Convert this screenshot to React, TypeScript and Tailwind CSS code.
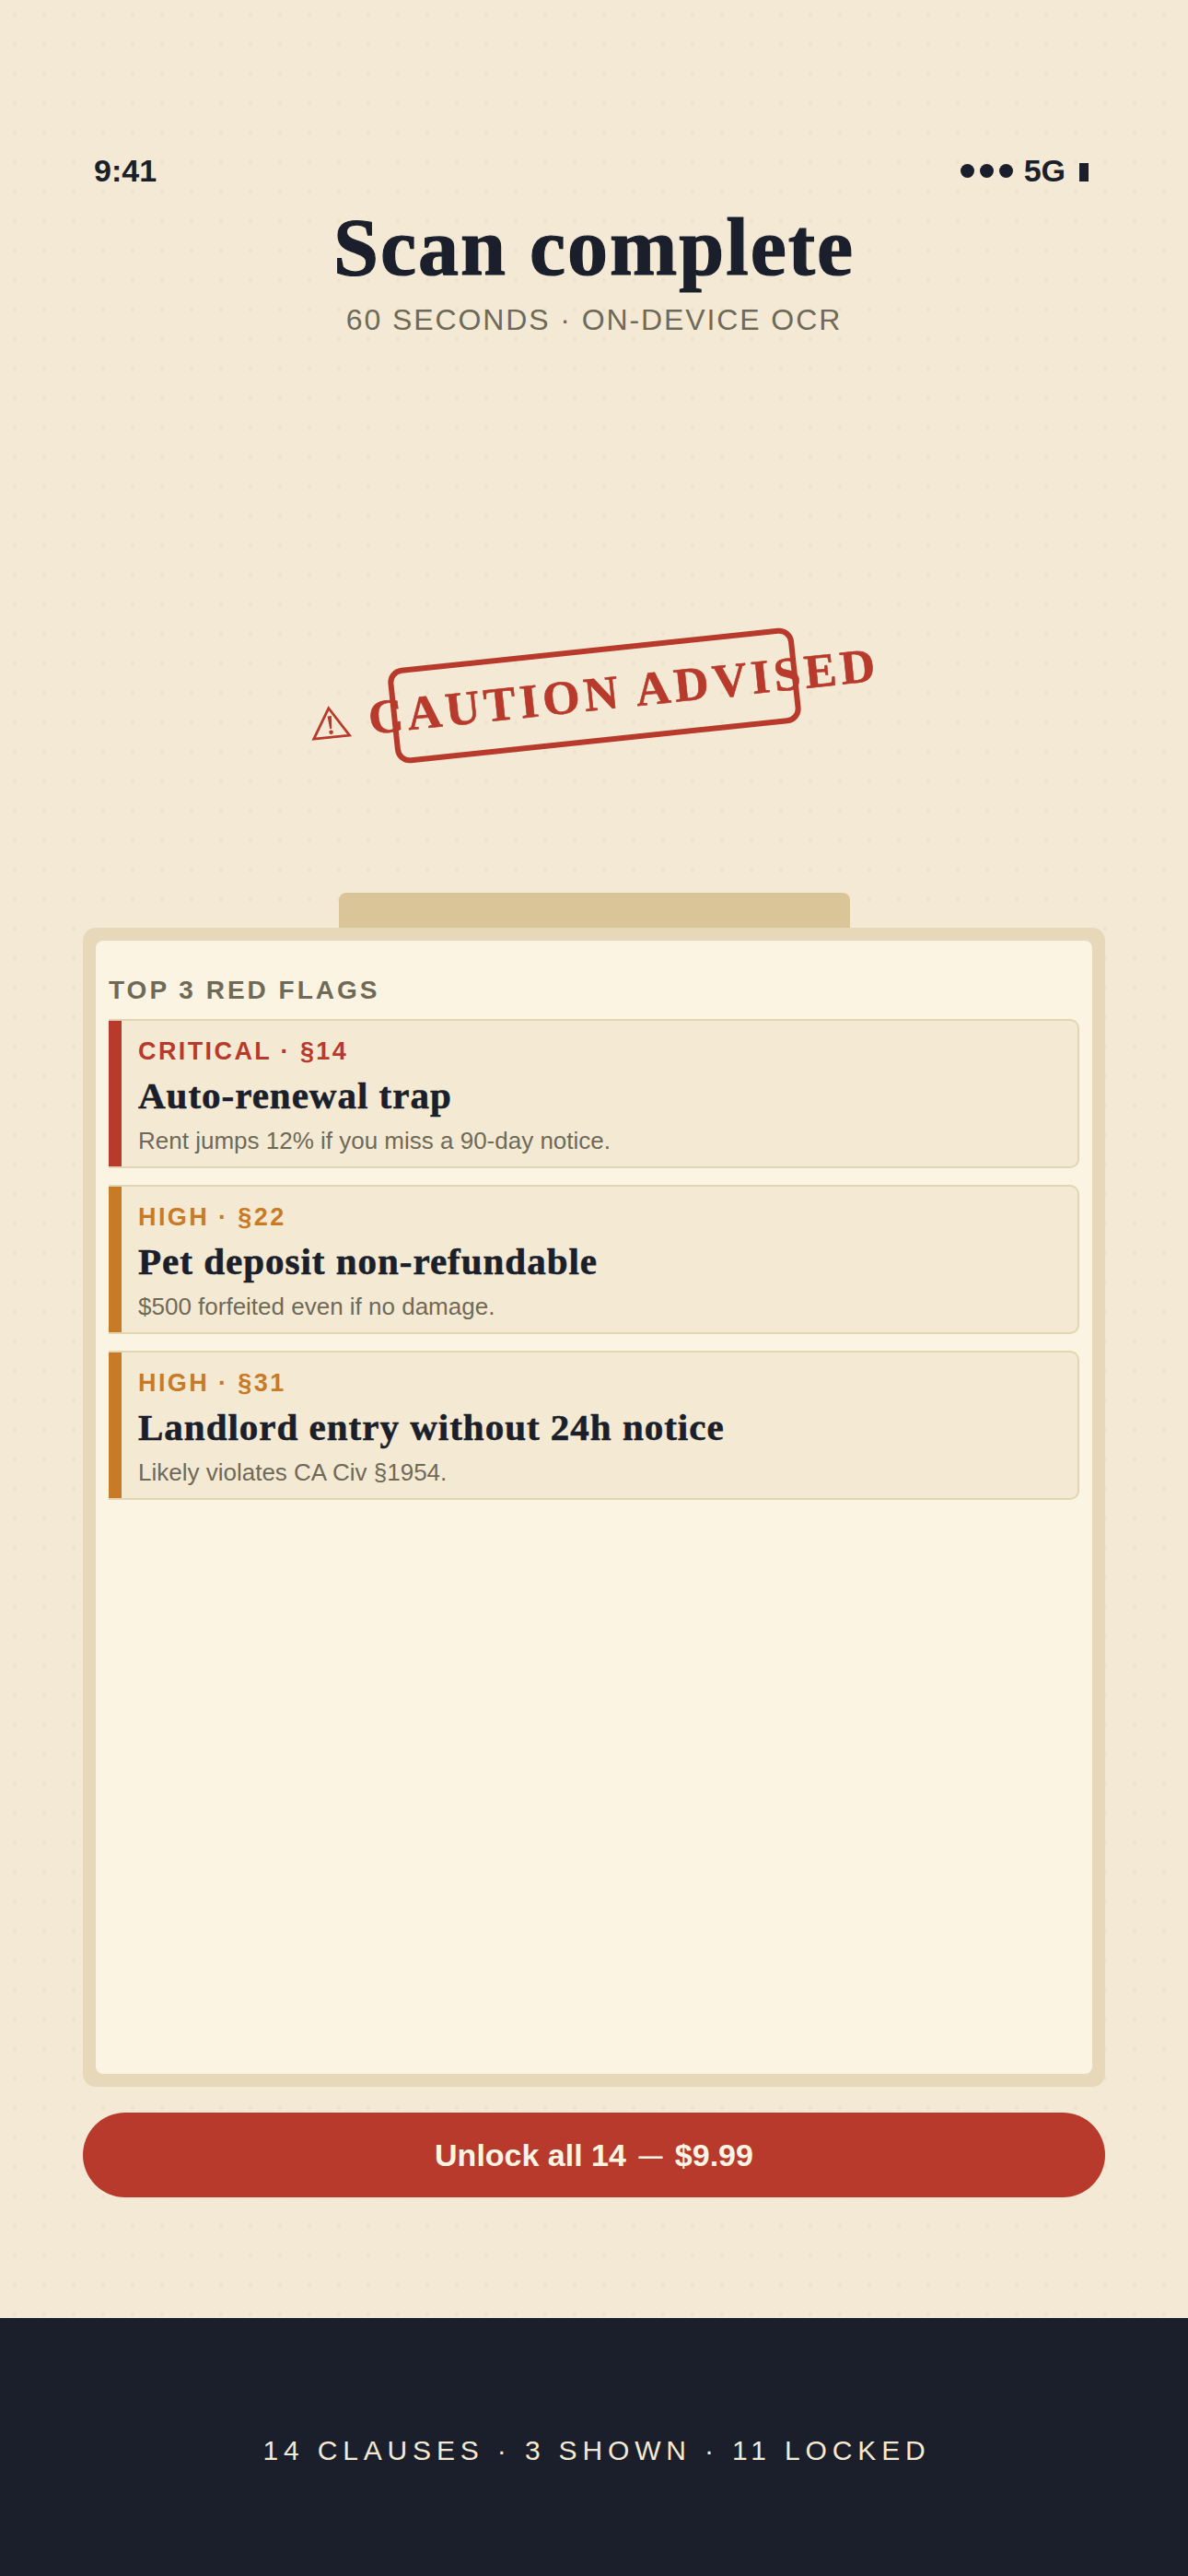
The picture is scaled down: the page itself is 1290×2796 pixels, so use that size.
const sans = "font-['Liberation_Sans',Arial,sans-serif]"
const serif = "font-['Liberation_Serif','Times_New_Roman',serif]"

const flags = [
  { tag: 'CRITICAL · §14', title: 'Auto-renewal trap', note: 'Rent jumps 12% if you miss a 90-day notice.', bar: 'bg-[#b73a2c]', tagColor: 'text-[#b73a2c]' },
  { tag: 'HIGH · §22', title: 'Pet deposit non-refundable', note: '$500 forfeited even if no damage.', bar: 'bg-[#c77b26]', tagColor: 'text-[#c77b26]' },
  { tag: 'HIGH · §31', title: 'Landlord entry without 24h notice', note: 'Likely violates CA Civ §1954.', bar: 'bg-[#c77b26]', tagColor: 'text-[#c77b26]' },
]

const FlagCard = ({ tag, title, note, bar, tagColor }: (typeof flags)[number]) => (
  <div className="flex h-[162px] overflow-hidden rounded-r-[10px] border-y-2 border-r-2 border-[#e2d5b4] bg-[#f4e9d3]">
    <div className={`-my-[2px] w-[14px] shrink-0 ${bar}`} />
    <div className="flex flex-col pl-[18px] pt-[17px]">
      <p className={`text-[27px] font-bold leading-[32px] tracking-[2.4px] ${tagColor}`}>{tag}</p>
      <h3 className={`${serif} mt-[7px] text-[41px] font-bold leading-[50px] tracking-[1px] text-[#1a1f2b] [-webkit-text-stroke:0.6px_#1a1f2b]`}>{title}</h3>
      <p className="mt-[7px] text-[26px] leading-[34px] text-[#6f6a58]">{note}</p>
    </div>
  </div>
)

export default function App() {
  return (
    <div className={`${sans} flex h-[2796px] w-[1290px] flex-col overflow-hidden bg-[#f4e9d4] bg-[radial-gradient(circle,#ebdfc5_1px,transparent_2px)] bg-[length:32px_32px]`}>
      <div className="flex h-[2516px] flex-col px-[90px]">
        <div className="flex items-center justify-between pl-[12px] pr-[18px] pt-[165px]">
          <span className="text-[34px] font-bold leading-[40px] text-[#1a1f2b]">9:41</span>
          <span className="flex items-center text-[34px] font-bold leading-[40px] text-[#1a1f2b]">
            <span className="mr-[12px] flex gap-[6px]">
              <i className="h-[15px] w-[15px] rounded-full bg-[#1a1f2b]" />
              <i className="h-[15px] w-[15px] rounded-full bg-[#1a1f2b]" />
              <i className="h-[15px] w-[15px] rounded-full bg-[#1a1f2b]" />
            </span>
            5G
            <i className="ml-[15px] mt-[4px] h-[20px] w-[10px] bg-[#1a1f2b]" />
          </span>
        </div>

        <h1 className={`${serif} mt-[16px] text-center text-[88px] font-bold leading-[96px] tracking-[2px] text-[#1a1f2b] [-webkit-text-stroke:1.2px_#1a1f2b]`}>Scan complete</h1>
        <p className="mt-[10px] text-center text-[32px] leading-[40px] tracking-[1.9px] text-[#6f6a58]">60 SECONDS · ON-DEVICE OCR</p>

        <div className="mt-[336px] flex justify-center">
          <div className="flex h-[104px] w-[443px] -rotate-6 items-center justify-center rounded-[16px] border-[6px] border-[#b73a2c] pb-[3px]">
            <span className={`${serif} flex shrink-0 items-center gap-[20px] whitespace-nowrap text-[52px] font-bold tracking-[4.5px] text-[#b73a2c] [-webkit-text-stroke:0.6px_#b73a2c]`}>
              <svg width="44" height="36" viewBox="0 0 44 36" fill="none" className="shrink-0">
                <path d="M22 2.5 41.5 34H2.5Z" stroke="#b73a2c" strokeWidth="2.8" strokeLinejoin="miter" />
                <path d="M19.8 11h4.4l-1.2 14h-2Z" fill="#b73a2c" />
                <circle cx="22" cy="28.6" r="2.3" fill="#b73a2c" />
              </svg>
              CAUTION ADVISED
            </span>
          </div>
        </div>

        <div className="mt-[162px] flex justify-center">
          <div className="h-[38px] w-[555px] rounded-t-[8px] bg-[#d9c597]" />
        </div>
        <div className="flex h-[1258px] flex-col rounded-[14px] bg-[#e6d8b8] p-[14px]">
          <div className="flex flex-1 flex-col rounded-[8px] bg-[#fbf4e2] px-[14px] pt-[37px]">
            <h2 className="text-[28px] font-bold leading-[34px] tracking-[3px] text-[#6f6a58]">TOP 3 RED FLAGS</h2>
            <div className="mt-[14px] flex flex-col gap-[18px]">
              {flags.map((f) => (
                <FlagCard key={f.title} {...f} />
              ))}
            </div>
          </div>
        </div>
        <button className="mt-[28px] h-[92px] w-full rounded-full bg-[#b73a2c] text-[34px] font-bold text-[#fbf4e2]">
          Unlock all 14 <span className="mx-[4px] inline-block -translate-y-[2px] text-[26px]">—</span> $9.99
        </button>
      </div>
      <div className="flex flex-1 items-center justify-center bg-[#1a1f2b] pl-[6px] pt-[6px]">
        <p className="text-[30px] tracking-[5.85px] text-[#f4e9d4]">14 CLAUSES · 3 SHOWN · 11 LOCKED</p>
      </div>
    </div>
  )
}
